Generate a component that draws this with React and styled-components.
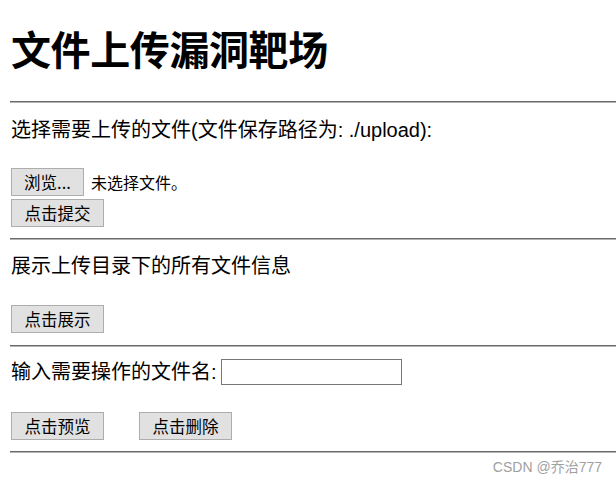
import React from "react";
import styled, { createGlobalStyle } from "styled-components";

const GlobalStyle = createGlobalStyle`
    html, body {
        margin: 0;
        padding: 0;
        background: #fff;
    }
    body {
        font-family: "Liberation Sans", "Noto Sans CJK SC", sans-serif;
        color: #000;
    }
`;

const Page = styled.div`
    width: 606px;
    height: 483px;
    padding-left: 10px;
    overflow: hidden;
    position: relative;
`;

const Title = styled.h1`
    margin: 27px 0 0 1px;
    font-size: 40px;
    line-height: 48px;
    font-weight: 700;
    letter-spacing: -0.4px;
    white-space: nowrap;
`;

const Rule = styled.div`
    margin-top: ${(props) => props.top}px;
    height: 2px;
    border-top: 1px solid #6b6b6b;
    border-bottom: 1px solid #b4b4b4;
    box-sizing: border-box;
`;

const Text = styled.div`
    margin: ${(props) => props.top}px 0 0 1px;
    font-size: 20px;
    line-height: 24px;
    white-space: nowrap;
`;

const Row = styled.div`
    display: flex;
    align-items: center;
    gap: ${(props) => props.gap || 0}px;
    margin: ${(props) => props.top}px 0 0 1px;
`;

const Button = styled.button`
    box-sizing: border-box;
    height: 28px;
    width: ${(props) => props.w || 93}px;
    padding: 0;
    border: 1px solid #adadad;
    background: #e1e1e1;
    font-family: "Noto Sans CJK SC", sans-serif;
    font-size: 16.5px;
    line-height: 26px;
    color: #000;
`;

const FileName = styled.span`
    margin-left: 7px;
    font-family: "Noto Sans CJK SC", sans-serif;
    font-size: 16px;
    line-height: 28px;
`;

const Label = styled.span`
    font-size: 20px;
    line-height: 24px;
    white-space: nowrap;
`;

const Input = styled.input`
    box-sizing: border-box;
    width: 181px;
    height: 26px;
    margin-left: 4px;
    border: 1px solid #767676;
    padding: 0 3px;
    font-size: 16px;
`;

const Footer = styled.div`
    display: flex;
    justify-content: flex-end;
    padding-right: 14px;
    margin-top: 5px;
    font-family: "Liberation Sans", "Noto Sans CJK SC", sans-serif;
    font-size: 14px;
    line-height: 18px;
    color: #a0a0a0;
`;

function App() {
    return (
        <Page>
            <GlobalStyle />
            <Title>文件上传漏洞靶场</Title>
            <Rule top={26} />
            <Text top={15}>选择需要上传的文件(文件保存路径为: ./upload):</Text>
            <Row top={26}>
                <Button w={73}>浏览...</Button>
                <FileName>未选择文件。</FileName>
            </Row>
            <Row top={3}>
                <Button>点击提交</Button>
            </Row>
            <Rule top={11} />
            <Text top={14}>展示上传目录下的所有文件信息</Text>
            <Row top={27}>
                <Button>点击展示</Button>
            </Row>
            <Rule top={12} />
            <Row top={12}>
                <Label>输入需要操作的文件名:</Label>
                <Input type="text" />
            </Row>
            <Row top={27} gap={35}>
                <Button>点击预览</Button>
                <Button>点击删除</Button>
            </Row>
            <Rule top={11} />
            <Footer>CSDN @乔治777</Footer>
        </Page>
    );
}

export default App;
